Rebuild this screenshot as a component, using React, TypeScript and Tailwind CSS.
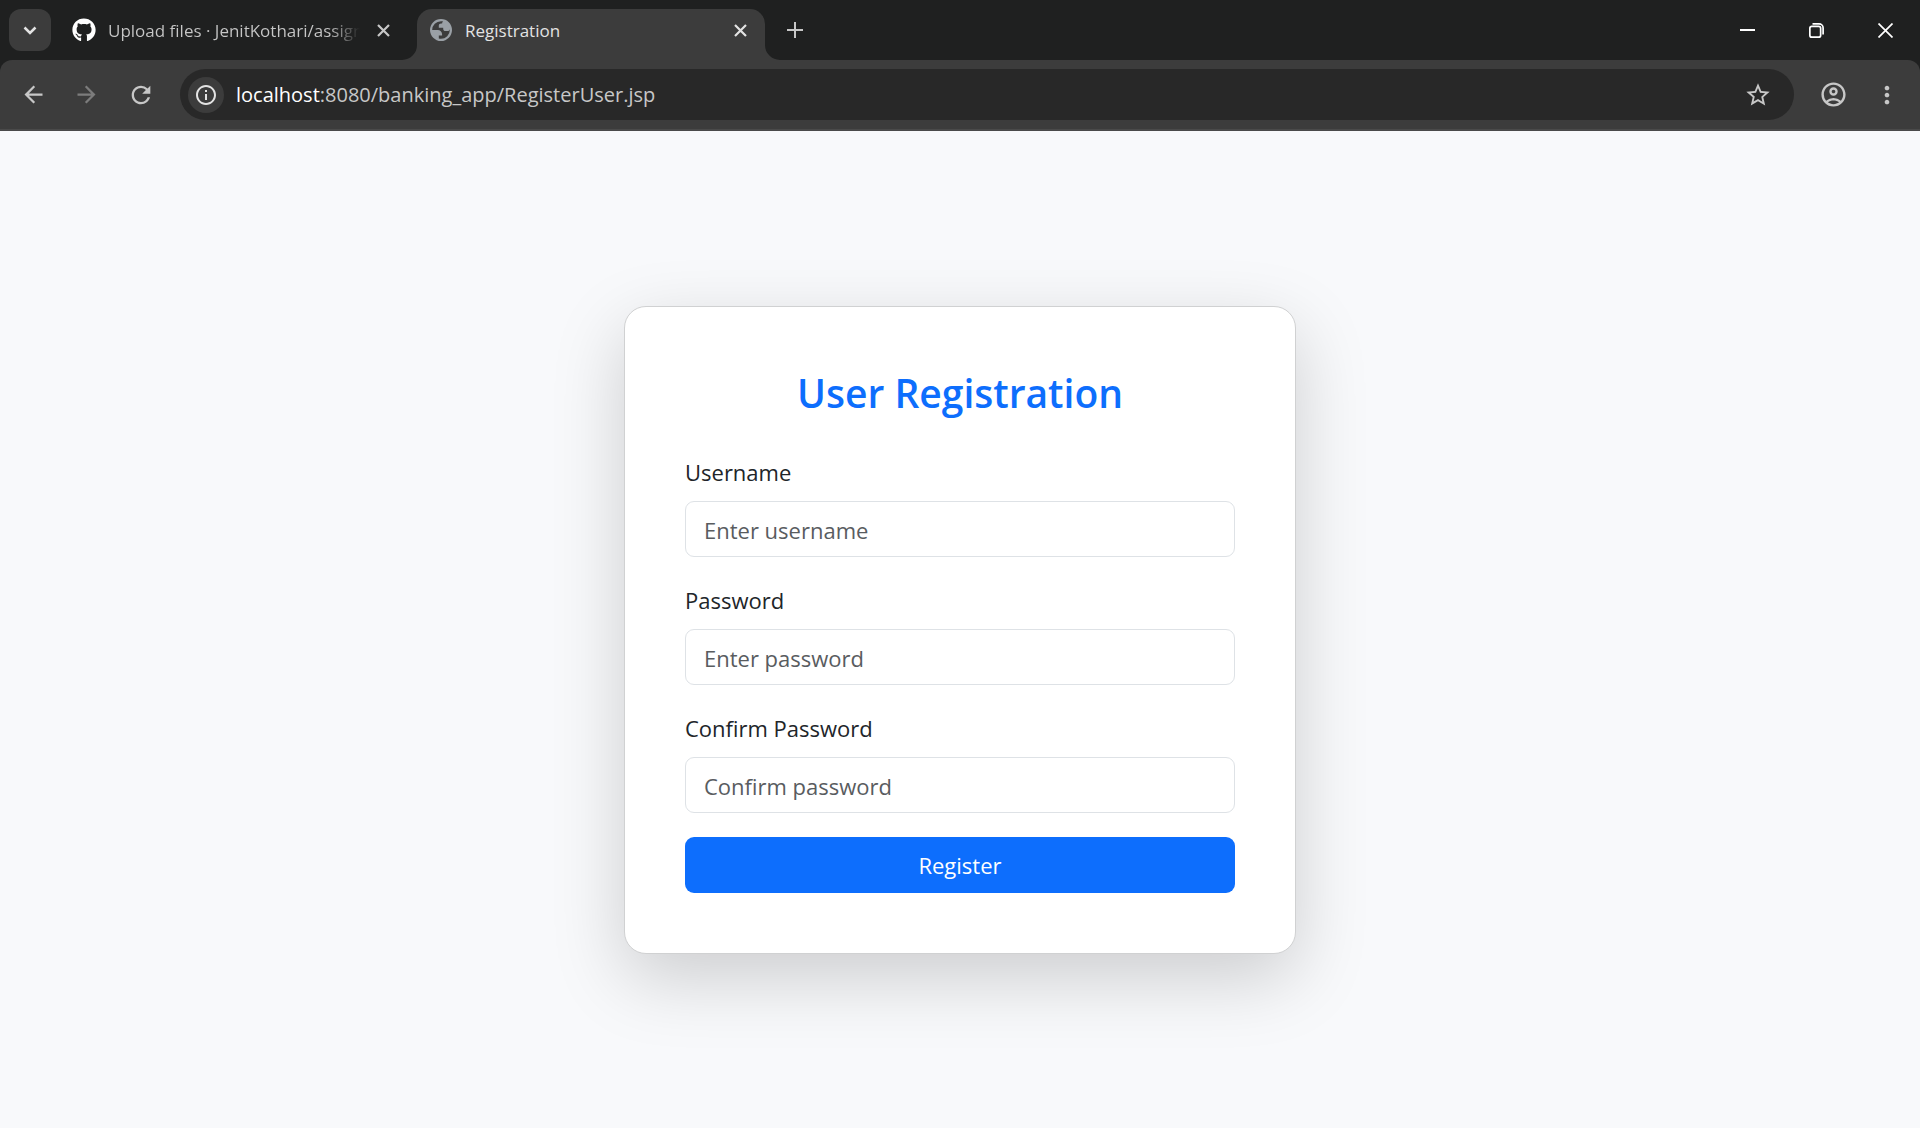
import { FaGithub } from "react-icons/fa";
import {
  MdArrowBack,
  MdArrowForward,
  MdInfoOutline,
  MdMoreVert,
  MdOutlineAccountCircle,
  MdRefresh,
  MdStarOutline,
} from "react-icons/md";

function Cross() {
  return (
    <svg width="13" height="13" viewBox="0 0 13 13" fill="none" stroke="currentColor" strokeWidth="2.2">
      <path d="M1 1l11 11M12 1L1 12" />
    </svg>
  );
}

function Globe() {
  return (
    <svg width="22" height="22" viewBox="80 -880 800 800" fill="#9aa0a6" className="shrink-0">
      <path d="M480-80q-83 0-156-31.5T197-197q-54-54-85.5-127T80-480q0-83 31.5-156T197-763q54-54 127-85.5T480-880q83 0 156 31.5T763-763q54 54 85.5 127T880-480q0 83-31.5 156T763-197q-54 54-127 85.5T480-80Zm0-80q134 0 227-93t93-227q0-7-.5-14.5T799-507q-5 29-27 48t-52 19h-80q-33 0-56.5-23.5T560-520v-40H400v-80q0-33 23.5-56.5T480-720h40q0-23 12.5-40.5T563-789q-20-5-40.5-8t-42.5-3q-134 0-227 93t-93 227h200q66 0 113 47t47 113v40H400v110q20 5 39.5 7.5T480-160Z" />
    </svg>
  );
}

function Flare({ side }: { side: "left" | "right" }) {
  return (
    <svg width="15" height="15" viewBox="0 0 15 15" className="shrink-0 self-end" fill="#3c3c3c">
      {side === "left" ? <path d="M15 0v15H0A15 15 0 0 0 15 0z" /> : <path d="M0 0v15h15A15 15 0 0 1 0 0z" />}
    </svg>
  );
}

function TabStrip() {
  return (
    <header className="flex h-[60px] items-stretch text-[#c7c7c7]">
      <button aria-label="Search tabs" className="mt-[9px] ml-[9px] flex size-[42px] shrink-0 items-center justify-center rounded-xl bg-[#3c3c3c] text-[#e3e3e3]">
        <svg width="14" height="9" viewBox="0 0 14 9" fill="none" stroke="currentColor" strokeWidth="2.5">
          <path d="M1.5 1.5L7 7l5.5-5.5" />
        </svg>
      </button>
      <div className="ml-[21px] flex w-[330px] items-center">
        <FaGithub size={24} className="shrink-0 text-white" />
        <span className="ml-3 w-[252px] bg-linear-to-r from-[#c7c7c7] from-88% to-transparent bg-clip-text pt-0.5 text-[17px] whitespace-nowrap text-transparent">
          Upload files · JenitKothari/assign
        </span>
        <button aria-label="Close tab" className="ml-[17px] shrink-0">
          <Cross />
        </button>
      </div>
      <Flare side="left" />
      <div className="mt-[9px] flex w-[348px] items-start rounded-t-[15px] bg-[#3c3c3c] pt-[7px] pr-[18px] pl-[13px] text-[#e3e3e3]">
        <div className="flex h-7 w-full items-center">
          <Globe />
          <span className="ml-[13px] grow pt-0.5 text-[17px]">Registration</span>
          <button aria-label="Close tab">
            <Cross />
          </button>
        </div>
      </div>
      <Flare side="right" />
      <button aria-label="New tab" className="ml-[7px]">
        <svg width="16" height="16" viewBox="0 0 16 16" stroke="currentColor" strokeWidth="2">
          <path d="M8 0v16M0 8h16" />
        </svg>
      </button>
      <div className="ml-auto flex items-center gap-[54px] pr-[27px] text-white">
        <button aria-label="Minimize">
          <svg width="15" height="15" viewBox="0 0 15 15">
            <path d="M0 6h15v2H0z" fill="currentColor" />
          </svg>
        </button>
        <button aria-label="Restore">
          <svg width="15" height="15" viewBox="0 0 15 15" fill="none" stroke="currentColor" strokeWidth="1.7">
            <rect x="0.85" y="3.35" width="10.8" height="10.8" rx="2" />
            <path d="M3.5 0.9h6.5a4.1 4.1 0 0 1 4.1 4.1v6.5" />
          </svg>
        </button>
        <button aria-label="Close window">
          <svg width="15" height="15" viewBox="0 0 15 15" stroke="currentColor" strokeWidth="1.7">
            <path d="M0.5 0.5l14 14M14.5 0.5l-14 14" />
          </svg>
        </button>
      </div>
    </header>
  );
}

function Toolbar() {
  return (
    <nav className="flex h-[71px] items-center rounded-t-xl border-b-2 border-[#4a4a4a] bg-[#3c3c3c] pr-[19px] pl-5 text-[#c7c7c7]">
      <button aria-label="Back"><MdArrowBack size={27} /></button>
      <button aria-label="Forward" className="ml-[26px] text-[#7c7c7c]"><MdArrowForward size={27} /></button>
      <button aria-label="Reload" className="ml-[27px]"><MdRefresh size={28} /></button>
      <div className="ml-[25px] flex h-[51px] grow items-center rounded-full bg-[#282828] pr-[22px] pl-2">
        <button aria-label="View site information" className="flex size-9 items-center justify-center rounded-full bg-[#3c3c3c] text-[#e3e3e3]">
          <MdInfoOutline size={24} />
        </button>
        <p className="ml-3 grow text-xl">
          <span className="text-white">localhost</span>:8080/banking_app/RegisterUser.jsp
        </p>
        <button aria-label="Bookmark this tab"><MdStarOutline size={28} /></button>
      </div>
      <button aria-label="Profile" className="ml-[25px]"><MdOutlineAccountCircle size={29} /></button>
      <button aria-label="Menu" className="ml-[25px]"><MdMoreVert size={28} /></button>
    </nav>
  );
}

const fields = [
  { id: "username", label: "Username", placeholder: "Enter username", type: "text" },
  { id: "password", label: "Password", placeholder: "Enter password", type: "password" },
  { id: "confirm", label: "Confirm Password", placeholder: "Confirm password", type: "password" },
];

export default function App() {
  return (
    <div className="flex min-h-screen flex-col bg-[#1f2020] font-['Open_Sans',sans-serif]">
      <TabStrip />
      <Toolbar />
      <main className="flex grow items-center justify-center bg-[#f8f9fb]">
        <form className="w-full max-w-2xl rounded-[22px] border border-[#d0d1d2] bg-white p-[60px] shadow-[0_24px_72px_rgba(0,0,0,0.175)]">
          <h1 className="mb-9 pt-0.5 text-center text-[39px] leading-12 font-semibold text-[#0d6efd]">User Registration</h1>
          {fields.map((f) => (
            <div key={f.id} className="mb-6">
              <label htmlFor={f.id} className="mb-3 block pt-0.5 text-[22px] leading-[34px] text-[#212529]">{f.label}</label>
              <input
                id={f.id}
                type={f.type}
                placeholder={f.placeholder}
                className="block h-14 w-full rounded-[9px] border border-[#dee2e6] px-[18px] pt-0.5 text-[22px] text-[#212529] placeholder:text-[#595c5f]"
              />
            </div>
          ))}
          <button type="submit" className="block h-14 w-full rounded-[9px] bg-[#0d6efd] pt-0.5 text-[22px] text-white">Register</button>
        </form>
      </main>
    </div>
  );
}
